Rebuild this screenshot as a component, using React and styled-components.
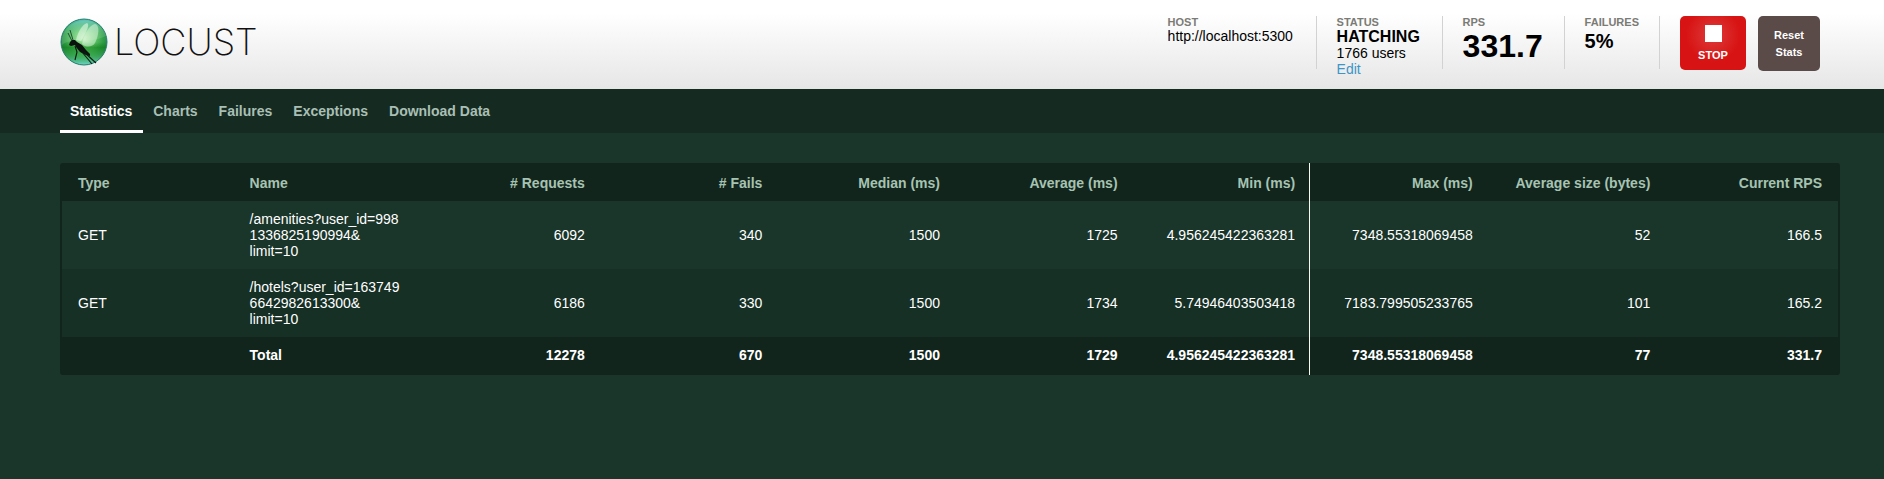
import React from "react";
import styled, { createGlobalStyle, css } from "styled-components";

const GlobalStyle = createGlobalStyle`
  *, *::before, *::after { box-sizing: border-box; }
  body {
    margin: 0;
    background: #1a3529;
    color: #fff;
    font-family: "Liberation Sans", Arial, sans-serif;
    font-size: 14px;
    line-height: 16px;
  }
`;

const TopBar = styled.header`
  display: flex;
  justify-content: space-between;
  align-items: flex-start;
  height: 89px;
  padding: 16px 64px 0 60px;
  color: #000;
  background: linear-gradient(#fff 15%, #e6e6e6);
`;

const Brand = styled.a`
  display: flex;
  align-items: center;
  gap: 6px;
  padding-top: 2px;
  color: #111;
  text-decoration: none;
`;

const BrandName = styled.span`
  font-family: Inter, "Liberation Sans", sans-serif;
  font-size: 36px;
  font-weight: 200;
  line-height: 48px;
`;

const Status = styled.div`
  display: flex;
  align-items: flex-start;
`;

const Box = styled.section`
  min-width: ${(p) => p.$min}px;
  height: 53px;
  margin-right: 20px;
  padding-right: 20px;
  border-right: 1px solid #d2d2d2;
`;

const BoxLabel = styled.h2`
  margin: 0;
  color: #7b7b76;
  font-size: 11px;
  font-weight: bold;
  line-height: 12px;
  text-transform: uppercase;
`;

const sizes = {
  small: css`font-size: 14px; line-height: 16px;`,
  state: css`font-size: 16px; line-height: 17px; font-weight: bold;`,
  medium: css`font-size: 20px; line-height: 26px; font-weight: bold;`,
  large: css`font-size: 32px; line-height: 36px; font-weight: bold;`,
};

const BoxValue = styled.div`
  ${(p) => sizes[p.$size || "small"]}
`;

const EditLink = styled.a`
  display: block;
  color: #3d94c6;
  text-decoration: none;
`;

const ActionButton = styled.button`
  border: 0;
  border-radius: 5px;
  padding: 0;
  color: #fff;
  font: bold 11px/17px "Liberation Sans", Arial, sans-serif;
  cursor: pointer;
`;

const StopButton = styled(ActionButton)`
  display: flex;
  flex-direction: column;
  align-items: center;
  gap: 5px;
  width: 66px;
  height: 54px;
  padding-top: 9px;
  background: radial-gradient(circle 27px at 50% 35%, #dc3c3c, #d81313);
`;

const StopMark = styled.span`
  width: 17px;
  height: 17px;
  background: #fff;
`;

const ResetButton = styled(ActionButton)`
  width: 62px;
  height: 55px;
  margin-left: 12px;
  padding: 0 12px;
  background: #5a4a48;
`;

const Tabs = styled.nav`
  display: flex;
  padding: 0 60px;
  background: #152b22;
`;

const Tab = styled.a`
  height: 44px;
  padding: 14px 11px 0 10px;
  border-bottom: 3px solid ${(p) => (p.$active ? "#fff" : "transparent")};
  color: ${(p) => (p.$active ? "#fff" : "#a9bfb4")};
  font-weight: bold;
  text-decoration: none;
`;

const Main = styled.main`
  padding: 30px 44px 30px 60px;
`;

const TableFrame = styled.div`
  position: relative;
  border: 2px solid #12251c;
  border-radius: 3px;
  background: #12251c;
`;

const Marker = styled.span`
  position: absolute;
  top: -2px;
  bottom: -2px;
  left: 70.2%;
  width: 1px;
  background: #f8f8f2;
`;

const Table = styled.table`
  width: 100%;
  table-layout: fixed;
  border-collapse: collapse;
  text-align: right;

  th, td {
    padding: 10px;
  }
  th {
    color: #a6c3b2;
    font-weight: bold;
  }
  th:nth-child(-n + 2), td:nth-child(-n + 2) {
    text-align: left;
  }
  th:first-child, td:first-child {
    padding-left: 16px;
  }
  th:last-child, td:last-child {
    padding-right: 16px;
  }
  tfoot td {
    font-weight: bold;
  }
`;

const Row = styled.tr`
  background: ${(p) => (p.$dark ? "#163025" : "#1a3529")};
`;

const NameCell = styled.td`
  white-space: pre-line;
`;

const columns = [
  "Type", "Name", "# Requests", "# Fails", "Median (ms)", "Average (ms)",
  "Min (ms)", "Max (ms)", "Average size (bytes)", "Current RPS",
];

const rows = [
  {
    type: "GET",
    name: "/amenities?user_id=998\n1336825190994&\nlimit=10",
    values: ["6092", "340", "1500", "1725", "4.956245422363281", "7348.55318069458", "52", "166.5"],
  },
  {
    type: "GET",
    name: "/hotels?user_id=163749\n6642982613300&\nlimit=10",
    values: ["6186", "330", "1500", "1734", "5.74946403503418", "7183.799505233765", "101", "165.2"],
  },
];

const totals = ["12278", "670", "1500", "1729", "4.956245422363281", "7348.55318069458", "77", "331.7"];

const tabs = ["Statistics", "Charts", "Failures", "Exceptions", "Download Data"];

function LocustLogo() {
  return (
    <svg width="48" height="48" viewBox="0 0 48 48" aria-hidden="true">
      <defs>
        <radialGradient id="orb" cx="0.5" cy="0.42" r="0.58">
          <stop offset="0" stopColor="#c4f2bc" />
          <stop offset="0.35" stopColor="#6fcf74" />
          <stop offset="0.7" stopColor="#35a34a" />
          <stop offset="1" stopColor="#1f7a50" />
        </radialGradient>
        <linearGradient id="shade" x1="0" y1="0" x2="0" y2="1">
          <stop offset="0" stopColor="#5fc6cc" stopOpacity="0.9" />
          <stop offset="0.3" stopColor="#4cc08a" stopOpacity="0.1" />
          <stop offset="0.5" stopColor="#0a7a10" stopOpacity="0.05" />
          <stop offset="0.62" stopColor="#0a7a10" stopOpacity="0.55" />
          <stop offset="0.8" stopColor="#3fae58" stopOpacity="0.6" />
          <stop offset="1" stopColor="#6ed8cc" />
        </linearGradient>
      </defs>
      <circle cx="24" cy="24" r="23" fill="url(#orb)" />
      <circle cx="24" cy="24" r="23" fill="url(#shade)" stroke="#2a7f70" strokeWidth="1" />
      <path d="M2 27C10 19 26 27 46 18A23 23 0 0 0 2 20Z" fill="#fff" opacity="0.12" />
      <path d="M16 22C18 13 23 6 27 5C30 6 27 14 21 23Z" fill="#e4f8e4" opacity="0.6" />
      <path d="M22 26C24 16 29 7 35 6C40 7 39 17 35 25C33 29 26 30 22 26Z" fill="#e4f8e4" opacity="0.5" />
      <path d="M10 24L12 22L15 22L17 24L22 27L26 32L30 36L30 38L26 37L20 34L16 29L15 27L11 28L9 27Z" fill="#0b120d" />
      <path d="M13 22L10 12M12 23L8 15" fill="none" stroke="#10301f" strokeWidth="0.8" />
      <path d="M24 34L36 45M22 34L32 46M15 28L17 34L15 42" fill="none" stroke="#0b1a12" strokeWidth="1.1" />
    </svg>
  );
}

export default function App() {
  return (
    <>
      <GlobalStyle />
      <TopBar>
        <Brand href="#">
          <LocustLogo />
          <BrandName>LOCUST</BrandName>
        </Brand>
        <Status>
          <Box $min={149}>
            <BoxLabel>Host</BoxLabel>
            <BoxValue>http://localhost:5300</BoxValue>
          </Box>
          <Box $min={106}>
            <BoxLabel>Status</BoxLabel>
            <BoxValue $size="state">HATCHING</BoxValue>
            <BoxValue>1766 users</BoxValue>
            <EditLink href="#edit">Edit</EditLink>
          </Box>
          <Box $min={102}>
            <BoxLabel>RPS</BoxLabel>
            <BoxValue $size="large">331.7</BoxValue>
          </Box>
          <Box $min={75}>
            <BoxLabel>Failures</BoxLabel>
            <BoxValue $size="medium">5%</BoxValue>
          </Box>
          <StopButton type="button">
            <StopMark />
            STOP
          </StopButton>
          <ResetButton type="button">Reset Stats</ResetButton>
        </Status>
      </TopBar>
      <Tabs>
        {tabs.map((name, i) => (
          <Tab key={name} href="#" $active={i === 0}>{name}</Tab>
        ))}
      </Tabs>
      <Main>
        <TableFrame>
          <Table>
            <thead>
              <tr>
                {columns.map((c) => <th key={c} scope="col">{c}</th>)}
              </tr>
            </thead>
            <tbody>
              {rows.map((r, i) => (
                <Row key={r.name} $dark={i % 2 === 1}>
                  <td>{r.type}</td>
                  <NameCell>{r.name}</NameCell>
                  {r.values.map((v, j) => <td key={j}>{v}</td>)}
                </Row>
              ))}
            </tbody>
            <tfoot>
              <tr>
                <td />
                <td>Total</td>
                {totals.map((v, j) => <td key={j}>{v}</td>)}
              </tr>
            </tfoot>
          </Table>
          <Marker />
        </TableFrame>
      </Main>
    </>
  );
}
